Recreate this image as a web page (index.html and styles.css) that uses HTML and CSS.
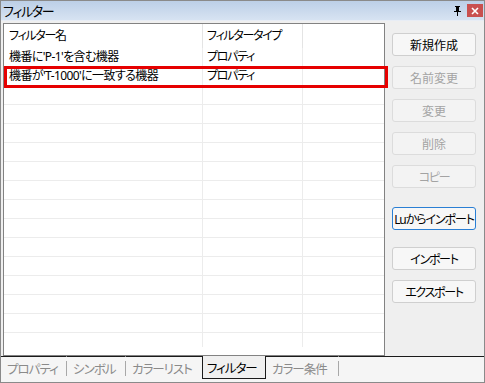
FILE: index.html
```html
<!DOCTYPE html>
<html lang="ja">
<head>
<meta charset="utf-8">
<link rel="stylesheet" href="styles.css">
</head>
<body>
<div class="window">
  <div class="titlebar">
    <span class="title">フィルター</span>
    <span class="pin"><svg width="9" height="10" viewBox="0 0 9 10"><path d="M2 0h5v1H6v4h2v1H5v4H4V6H1V5h2V1H2z" fill="#000"/></svg></span>
    <span class="close"><svg width="8" height="8" viewBox="0 0 8 8"><path d="M1 1l6 6M7 1L1 7" stroke="#fff" stroke-width="1.6"/></svg></span>
  </div>
  <div class="main">
    <div class="grid">
      <div class="row head"><div class="c1 k">フィルター名</div><div class="c2 k">フィルタータイプ</div><div class="c3"></div></div>
      <div class="row"><div class="c1 m">機番に'P-1'を含む機器</div><div class="c2 k">プロパティ</div><div class="c3"></div></div>
      <div class="row sel"><div class="c1 m">機番が'T-1000'に一致する機器</div><div class="c2 k">プロパティ</div><div class="c3"></div></div>
      <div class="row"><div class="c1"></div><div class="c2"></div><div class="c3"></div></div>
      <div class="row"><div class="c1"></div><div class="c2"></div><div class="c3"></div></div>
      <div class="row"><div class="c1"></div><div class="c2"></div><div class="c3"></div></div>
      <div class="row"><div class="c1"></div><div class="c2"></div><div class="c3"></div></div>
      <div class="row"><div class="c1"></div><div class="c2"></div><div class="c3"></div></div>
      <div class="row"><div class="c1"></div><div class="c2"></div><div class="c3"></div></div>
      <div class="row"><div class="c1"></div><div class="c2"></div><div class="c3"></div></div>
      <div class="row"><div class="c1"></div><div class="c2"></div><div class="c3"></div></div>
      <div class="row"><div class="c1"></div><div class="c2"></div><div class="c3"></div></div>
      <div class="row"><div class="c1"></div><div class="c2"></div><div class="c3"></div></div>
      <div class="row"><div class="c1"></div><div class="c2"></div><div class="c3"></div></div>
      <div class="row"><div class="c1"></div><div class="c2"></div><div class="c3"></div></div>
      <div class="row"><div class="c1"></div><div class="c2"></div><div class="c3"></div></div>
      <div class="row"><div class="c1"></div><div class="c2"></div><div class="c3"></div></div>
      <div class="mark"></div>
    </div>
    <div class="buttons">
      <div class="btn">新規作成</div>
      <div class="btn dis">名前変更</div>
      <div class="btn dis">変更</div>
      <div class="btn dis">削除</div>
      <div class="btn dis k">コピー</div>
      <div class="btn focus k">Luからインポート</div>
      <div class="btn k">インポート</div>
      <div class="btn k">エクスポート</div>
    </div>
  </div>
  <div class="tabs">
    <div class="tab t1">プロパティ</div>
    <div class="tab t2">シンボル</div>
    <div class="tab t3">カラーリスト</div>
    <div class="tab active">フィルター</div>
    <div class="tab t5">カラー条件</div>
    <div class="fill"></div>
  </div>
</div>
</body>
</html>
```

FILE: styles.css
```css
* { box-sizing: border-box; }
html, body { margin: 0; padding: 0; }
body {
  width: 485px; height: 383px; overflow: hidden;
  font-family: "Noto Sans", "Noto Sans CJK JP", sans-serif;
  font-feature-settings: "palt";
  font-size: 12px; color: #000;
}
.k { letter-spacing: -1.3px; }
.m { letter-spacing: -0.6px; }
.window {
  width: 485px; height: 383px;
  border: 1px solid #8a8a8a;
  background: #efefef;
  display: flex; flex-direction: column;
}
.titlebar {
  height: 20px; flex: none;
  background: linear-gradient(#bccfe7, #d7e3f2);
  display: flex; align-items: center;
  padding: 0 1px 0 2px;
  border-bottom: 1px solid #e8edf5;
}
.title { font-size: 13px; flex: 1; line-height: 18px; letter-spacing: -1.3px; }
.pin { width: 10px; height: 12px; display: flex; align-items: center; margin-right: 4px; }
.close {
  width: 16px; height: 13px; background: #c9504f;
  display: flex; align-items: center; justify-content: center;
}
.main {
  flex: 1; display: flex;
  padding: 2px 0 0 2px;
  min-height: 0;
}
.grid {
  position: relative;
  flex: none;
  width: 382px; height: 333px;
  border: 1px solid #828282;
  background: #fff;
}
.row { display: flex; height: 19px; border-bottom: 1px solid #ececec; }
.row.head { height: 24px; border-bottom: none; }
.row > div { height: 100%; display: flex; align-items: center; white-space: nowrap; line-height: 1; }
.c1 { width: 199px; padding-left: 5px; border-right: 1px solid #ececec; }
.c2 { width: 100px; padding-left: 4px; border-right: 1px solid #ececec; }
.c3 { flex: 1; }
.head .c1, .head .c2 { border-right-color: #e4e4e4; }
.grid .row:nth-last-child(2) { height: 14px; border-bottom: none; }
.mark {
  position: absolute; left: 0; top: 42px;
  width: 384px; height: 22px;
  border: 3px solid #e60000;
}
.buttons {
  flex: none; display: flex; flex-direction: column;
  padding: 10px 0 0 7px;
}
.btn {
  width: 84px;
  height: 23px; margin-bottom: 10px;
  border: 1px solid #cfcfcf; border-radius: 3px;
  background: #f7f7f7;
  display: flex; align-items: center; justify-content: center;
  font-size: 12px; white-space: nowrap;
}
.btn.dis { color: #a3a3a3; border-color: #dcdcdc; background: #f3f3f3; }
.btn.focus { border-color: #2a7fd4; margin-top: 9px; margin-bottom: 17px; padding: 0; letter-spacing: -1.1px; }
.tabs {
  height: 26px; flex: none;
  display: flex; align-items: stretch;
  background: #f5f5f5;
  color: #8a8a8a;
  font-size: 12.5px;
  letter-spacing: -1px;
}
.tab {
  position: relative;
  border-top: 1px solid #1a1a1a;
  display: flex; align-items: center;
  padding-left: 6px;
  height: 23px;
  white-space: nowrap;
}
.t1, .t2, .t5 { border-right: 1px solid transparent; }
.t1::after, .t2::after, .t5::after {
  content: ""; position: absolute; right: -1px; top: 4px; width: 1px; height: 15px; background: #a8a8a8;
}
.t1 { width: 66px; }
.t2 { width: 59px; }
.t3 { width: 76px; }
.t5 { width: 73px; }
.tab.active {
  width: 64px;
  color: #000; background: #f0f0f0;
  border: 1px solid #1a1a1a; border-top: none;
  padding-left: 4px;
}
.fill { flex: 1; border-top: 1px solid #1a1a1a; height: 23px; }
```
